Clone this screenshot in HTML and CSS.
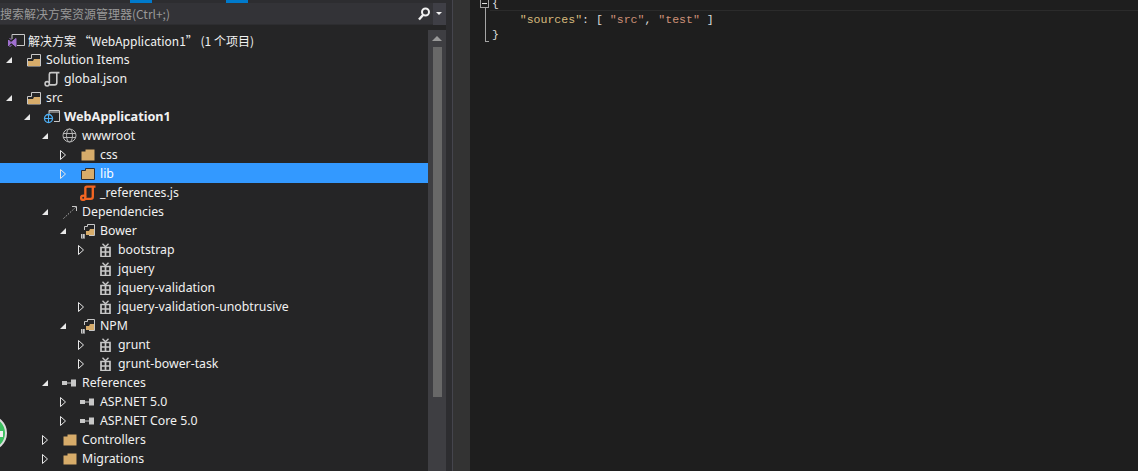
FILE: index.html
```html
<!DOCTYPE html>
<html lang="zh">
<head>
<meta charset="utf-8">
<title>解决方案资源管理器</title>
<link rel="stylesheet" href="styles.css">
</head>
<body>
<svg class="defs" width="0" height="0" aria-hidden="true">
  <defs>
    <symbol id="open" viewBox="0 0 8 12"><path d="M6 3v6H0z" fill="#e8e8e8"/></symbol>
    <symbol id="closed" viewBox="0 0 8 12"><path d="M.5 1.500v9l5-4.500z" fill="none" stroke="#e8e8e8"/></symbol>
    <symbol id="folder" viewBox="0 0 14 12"><path d="M.5 2.500h4V.5h9v11H.5z" fill="#d7ac6a"/></symbol>
    <symbol id="solfolder" viewBox="0 0 16 16"><path d="M1.500 14V6.500h4v-4h9V14z" fill="#252526" stroke="#c8c8c8"/><path d="M2 14V9h5l1-2h6v7z" fill="#d7ac6a"/></symbol>
    <symbol id="pkg" viewBox="0 0 11 14"><path d="M1 4.500h9v9H1zM1 9h9M5.500 4.500v9" fill="none" stroke="#c8c8c8" stroke-width="1.700"/><path d="M2.500.8l3 3 3-3" fill="none" stroke="#c8c8c8" stroke-width="1.400"/></symbol>
    <symbol id="ref" viewBox="0 0 14 8"><path d="M0 2h5v4H0z" fill="#c8c8c8"/><path d="M5 4h4" stroke="#c8c8c8"/><path d="M9 .5h5v7H9z" fill="#c8c8c8"/></symbol>
    <symbol id="dep" viewBox="0 0 16 16"><path d="M1.500 14.500L14 3" fill="none" stroke="#b4b4b4" stroke-dasharray="1.500 1.500"/><path d="M10 2.500h4.500V7" fill="none" stroke="#c8c8c8"/></symbol>
    <symbol id="bower" viewBox="0 0 16 16"><path d="M4.500 7V3.500h3v-2h7v11H9" fill="none" stroke="#c8c8c8"/><path d="M6 11V8h3l1-2h4v6H6z" fill="#d7ac6a"/><path d="M0 10h6v6H0z" fill="#252526"/><path d="M1 11h4v4.500H1z" fill="#c8c8c8"/><path d="M2 12h1M4 12h.5M2 14h1M4 14h.5" stroke="#252526"/></symbol>
    <symbol id="file" viewBox="0 0 15 15"><path d="M5 11V3c0-1 .5-1.500 1.500-1.500H14.500M12 1.500V11c0 1.500-.5 2-2 2H5.500" fill="none" stroke="currentColor"/><circle cx="3" cy="12" r="2" fill="none" stroke="currentColor"/></symbol>
  </defs>
</svg>
<div class="ide">
  <aside class="explorer">
    <div class="tabstrip"><i class="tick tick-a"></i><i class="tick tick-b"></i></div>
    <div class="search">
      <span class="search-text">搜索解决方案资源管理器(Ctrl+;)</span>
      <span class="search-btn">
        <svg width="14" height="14" viewBox="0 0 14 14"><circle cx="8.500" cy="5" r="3.500" fill="none" stroke="#f1f1f1" stroke-width="2"/><path d="M6 8l-4 4.500" stroke="#f1f1f1" stroke-width="2.400"/></svg>
      </span>
      <span class="search-drop"></span>
    </div>
    <div class="tree-wrap">
      <ul class="tree">
        <li class="row root"><svg class="ic ic-sol" viewBox="0 0 16 16"><path d="M4 6V1.500h12.500v11H9" fill="none" stroke="#c8c8c8"/><path d="M.5 7l2.500 2.500L.5 13zM3 9.500L8 5.500v8zM3.500 7L1.500 5M3.500 12l-2 2" fill="#a070d0" stroke="#a070d0"/></svg><span class="sol">解决方案 “WebApplication1” (1 个项目)</span></li>
        <li class="row l0"><svg class="tw"><use href="#open"/></svg><svg class="ic"><use href="#solfolder"/></svg><span>Solution Items</span></li>
        <li class="row l1"><span class="tw"></span><svg class="ic file-grey"><use href="#file"/></svg><span>global.json</span></li>
        <li class="row l0"><svg class="tw"><use href="#open"/></svg><svg class="ic"><use href="#solfolder"/></svg><span>src</span></li>
        <li class="row l1"><svg class="tw"><use href="#open"/></svg><svg class="ic" viewBox="0 0 16 16"><path d="M5 6V1.500h10.500v11H10M5 3h10" fill="none" stroke="#c8c8c8"/><circle cx="4.500" cy="9.500" r="4" fill="#252526" stroke="#4fb0f5" stroke-width="1.300"/><path d="M.5 9.500h8M4.500 5.500v8" stroke="#4fb0f5"/></svg><strong>WebApplication1</strong></li>
        <li class="row l2"><svg class="tw"><use href="#open"/></svg><svg class="ic" viewBox="0 0 16 16"><circle cx="7.500" cy="7.500" r="6.500" fill="none" stroke="#b4b4b4"/><ellipse cx="7.500" cy="7.500" rx="3" ry="6.500" fill="none" stroke="#b4b4b4"/><path d="M1 5.500h13M1 9.500h13" stroke="#b4b4b4"/></svg><span>wwwroot</span></li>
        <li class="row l3"><svg class="tw"><use href="#closed"/></svg><svg class="ic ic-folder"><use href="#folder"/></svg><span>css</span></li>
        <li class="row l3 sel"><svg class="tw"><use href="#closed"/></svg><svg class="ic ic-folder"><use href="#folder"/></svg><span>lib</span></li>
        <li class="row l3"><span class="tw"></span><svg class="ic file-orange"><use href="#file"/></svg><span>_references.js</span></li>
        <li class="row l2"><svg class="tw"><use href="#open"/></svg><svg class="ic"><use href="#dep"/></svg><span>Dependencies</span></li>
        <li class="row l3"><svg class="tw"><use href="#open"/></svg><svg class="ic"><use href="#bower"/></svg><span>Bower</span></li>
        <li class="row l4"><svg class="tw"><use href="#closed"/></svg><svg class="ic ic-pkg"><use href="#pkg"/></svg><span>bootstrap</span></li>
        <li class="row l4"><span class="tw"></span><svg class="ic ic-pkg"><use href="#pkg"/></svg><span>jquery</span></li>
        <li class="row l4"><span class="tw"></span><svg class="ic ic-pkg"><use href="#pkg"/></svg><span>jquery-validation</span></li>
        <li class="row l4"><svg class="tw"><use href="#closed"/></svg><svg class="ic ic-pkg"><use href="#pkg"/></svg><span>jquery-validation-unobtrusive</span></li>
        <li class="row l3"><svg class="tw"><use href="#open"/></svg><svg class="ic"><use href="#bower"/></svg><span>NPM</span></li>
        <li class="row l4"><svg class="tw"><use href="#closed"/></svg><svg class="ic ic-pkg"><use href="#pkg"/></svg><span>grunt</span></li>
        <li class="row l4"><svg class="tw"><use href="#closed"/></svg><svg class="ic ic-pkg"><use href="#pkg"/></svg><span>grunt-bower-task</span></li>
        <li class="row l2"><svg class="tw"><use href="#open"/></svg><svg class="ic ic-ref"><use href="#ref"/></svg><span>References</span></li>
        <li class="row l3"><svg class="tw"><use href="#closed"/></svg><svg class="ic ic-ref"><use href="#ref"/></svg><span>ASP.NET 5.0</span></li>
        <li class="row l3"><svg class="tw"><use href="#closed"/></svg><svg class="ic ic-ref"><use href="#ref"/></svg><span>ASP.NET Core 5.0</span></li>
        <li class="row l2"><svg class="tw"><use href="#closed"/></svg><svg class="ic ic-folder"><use href="#folder"/></svg><span>Controllers</span></li>
        <li class="row l2"><svg class="tw"><use href="#closed"/></svg><svg class="ic ic-folder"><use href="#folder"/></svg><span>Migrations</span></li>
      </ul>
      <div class="scrollbar">
        <span class="arrow"></span>
        <span class="thumb"></span>
      </div>
      <span class="badge"></span>
    </div>
  </aside>
  <div class="splitter"></div>
  <div class="margin"></div>
  <main class="editor">
    <div class="gutter">
      <span class="fold"></span>
      <span class="fold-line"></span>
    </div>
    <pre class="code">{
    <span class="key">"sources"</span>: [ <span class="str">"src"</span>, <span class="str">"test"</span> ]
}</pre>
  </main>
</div>
</body>
</html>
```
FILE: styles.css
```css
* { box-sizing: border-box; }
html, body { margin: 0; height: 100%; overflow: hidden; background: #1e1e1e; }
.defs { position: absolute; }
.ide { display: flex; height: 471px; font-family: "Noto Sans CJK SC", "Noto Sans", sans-serif; }
.explorer { width: 446px; flex: none; display: flex; flex-direction: column; background: #252526; color: #f1f1f1; }
.tabstrip { height: 3px; background: #2d2d30; display: flex; flex: none; }
.tick { display: block; height: 3px; background: #007acc; }
.tick-a { width: 22px; margin-left: 130px; }
.tick-b { width: 22px; margin-left: 74px; }
.search { height: 22px; flex: none; display: flex; align-items: center; background: #333337; border-bottom: 1px solid #2d2d30; }
.search-text { flex: 1; font-size: 12px; color: #999; font-family: "Noto Sans CJK SC", sans-serif; }
.search-btn { width: 19px; height: 22px; display: flex; align-items: center; justify-content: center; }
.search-drop { width: 13px; height: 22px; background: #3f3f46; position: relative; }
.search-drop::after { content: ""; position: absolute; left: 3px; top: 9px; border: 3px solid transparent; border-top-color: #f1f1f1; }
.tree-wrap { flex: 1; display: flex; padding-top: 6px; position: relative; min-height: 0; }
.tree { flex: 1; min-width: 0; list-style: none; margin: 0; padding: 0; font-family: "Noto Sans", sans-serif; font-size: 12.3px; }
.row { height: 19px; display: flex; align-items: center; white-space: nowrap; }
.row strong { font-weight: 700; font-size: 12.7px; margin-top: -2px; }
.sel { background: #3399ff; color: #fff; height: 20px; margin-top: -1px; padding-top: 1px; }
.tw { width: 8px; height: 12px; flex: none; margin-right: 12px; display: block; }
.ic { width: 16px; height: 16px; flex: none; margin-right: 4px; display: block; overflow: visible; }
.ic-sol { margin: 0 4px 0 8px; }
.ic-folder { width: 14px; height: 12px; margin: 0 5px 0 1px; }
.sel .ic-folder { stroke: #2d2d30; }
.ic-pkg { width: 11px; height: 14px; margin: 0 7px 0 2px; }
.ic-ref { width: 14px; height: 8px; margin: 0 6px 0 0; }
.file-grey { color: #c8c8c8; stroke-width: 1.5; }
.file-orange { color: #f26522; stroke-width: 2.2; }
.root { padding-left: 0; }
.l0 { padding-left: 6px; }
.l1 { padding-left: 24px; }
.l2 { padding-left: 42px; }
.l3 { padding-left: 60px; }
.l4 { padding-left: 78px; }
.sol { font-family: "Noto Sans CJK SC", sans-serif; font-size: 12px; }
.scrollbar { width: 18px; flex: none; background: #3e3e42; display: flex; flex-direction: column; align-items: center; margin-top: -1px; padding-top: 6px; }
.arrow { border: solid transparent; border-width: 0 5px 5px; border-bottom-color: #999; }
.thumb { width: 9px; height: 350px; background: #686868; margin-top: 6px; }
.badge { position: absolute; left: -29px; top: 390px; width: 36px; height: 36px; border-radius: 50%; background: #3cc060; border: 2px solid #dcdcdc; }
.badge::after { content: ""; position: absolute; left: 27px; top: 14px; width: 3px; height: 6px; background: #f1f1f1; }
.splitter { width: 7px; flex: none; background: #2d2d30; border-right: 1px solid #45454d; }
.margin { width: 17px; flex: none; background: #333333; }
.editor { flex: 1; background: #1e1e1e; position: relative; display: flex; min-width: 0; overflow: hidden; }
.editor::before { content: ""; position: absolute; left: 20px; right: 0; top: 10px; height: 1px; background: #2b2b2b; }
.gutter { width: 22px; flex: none; position: relative; }
.fold { position: absolute; left: 10px; top: 0; width: 9px; height: 8px; border: 1px solid #a5a5a5; border-top: 0; }
.fold::after { content: ""; position: absolute; left: 1px; top: 3px; width: 5px; height: 1px; background: #e0e0e0; }
.fold-line { position: absolute; left: 15px; top: 8px; width: 4px; height: 34px; border-left: 1px solid #a5a5a5; border-bottom: 1px solid #a5a5a5; }
.code { flex: 1; margin: -4px 0 0; font: 11.55px/15.5px "Liberation Mono", monospace; color: #dcdcdc; }
.key { color: #d7ba7d; }
.str { color: #ce9178; }
```
